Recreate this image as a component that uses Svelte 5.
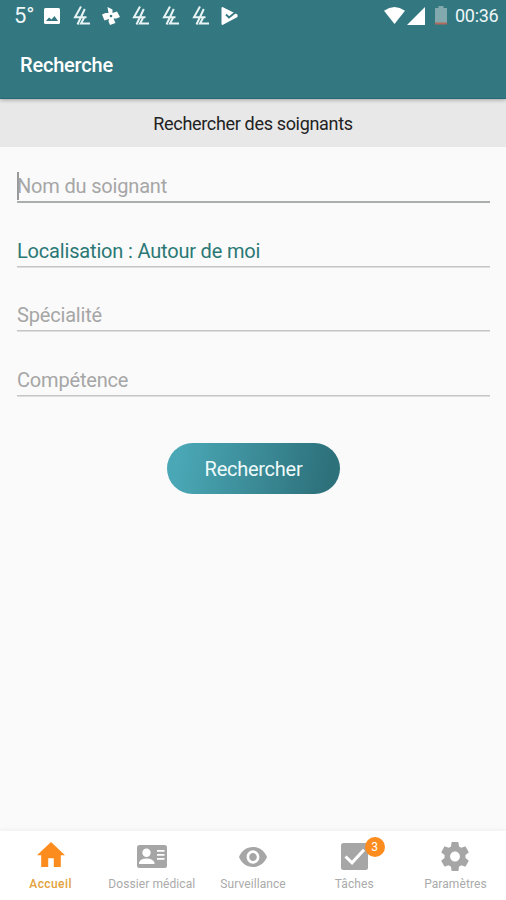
<script>
  const fields = [
    { label: 'Nom du soignant', kind: 'focus' },
    { label: 'Localisation : Autour de moi', kind: 'filled' },
    { label: 'Spécialité', kind: '' },
    { label: 'Compétence', kind: '' }
  ];
  const tabs = [
    { label: 'Accueil', icon: 'home' },
    { label: 'Dossier médical', icon: 'card' },
    { label: 'Surveillance', icon: 'eye' },
    { label: 'Tâches', icon: 'check', badge: 3 },
    { label: 'Paramètres', icon: 'gear' }
  ];
</script>

{#snippet lira()}
  <svg width="18" height="20" viewBox="0 0 18 20" fill="none" stroke="#e8f3f4" stroke-width="2">
    <path d="M8 .5 2 11.200H13.500M11.800 3 4.500 18.500M11 12 8 17.600H17" />
  </svg>
{/snippet}

<div class="screen">
  <header>
    <div class="status">
      <span class="temp">5°</span>
      <svg class="photo" width="16" height="16" viewBox="0 0 16 16"><path fill="#fff" fill-rule="evenodd" d="M1.500 0h13Q16 0 16 1.500v13q0 1.500-1.500 1.500h-13Q0 16 0 14.500v-13Q0 0 1.500 0zM2 13h12L10.500 8 7.500 11.500 5 9.500z" /></svg>
      <span class="l1">{@render lira()}</span>
      <svg class="fan" width="18" height="18" viewBox="0 0 18 18" fill="#fff">
        <path fill-rule="evenodd" d="M5.500 0 10.500 2.500V6L15 4.500 18 10 14.500 11.500H11.500L13.500 16 8 18 6.500 14.500 7 12 2.500 13.500 0 7.500 3.500 6H6.500zM9 7.700a1.300 1.300 0 1 0 .01 0z" />
      </svg>
      <span class="l2">{@render lira()}</span>
      <span class="l3">{@render lira()}</span>
      <span class="l4">{@render lira()}</span>
      <svg class="play" width="17" height="18" viewBox="0 0 17 18"><path fill="#fff" d="M1.500 0 16.500 7.500V10L1.500 18Q.5 18 .5 17V1Q.5 0 1.500 0z" /><path d="M5 7.500 8 10.500 15.500 4.500" fill="none" stroke="#337780" stroke-width="1.800" /></svg>
      <span class="gap"></span>
      <svg class="wifi" width="21" height="17" viewBox="0 0 22 17" preserveAspectRatio="none"><path fill="#fff" d="M0 3.800Q11-3.600 22 3.800L11 17z" /></svg>
      <svg class="signal" width="18" height="18" viewBox="0 0 18 18"><path fill="#fff" d="M18 0v18H0z" /></svg>
      <svg class="battery" width="12" height="19" viewBox="0 0 12 19"><path fill="#82a9ae" d="M3.500 0h5v2H12v15H0V2h3.500z" /><path fill="#b3695c" d="M0 16.500h12v2H0z" /></svg>
      <span class="clock">00:36</span>
    </div>
    <h1>Recherche</h1>
  </header>
  <div class="subtitle"><span>Rechercher des soignants</span></div>

  <main>
    {#each fields as f}
      <div class="field {f.kind}"><span>{f.label}</span></div>
    {/each}
    <button>Rechercher</button>
  </main>

  <nav>
    {#each tabs as t, i}
      <div class="tab" class:active={i === 0}>
        <div class="icon">
          {#if t.icon === 'home'}
            <svg width="28" height="25" viewBox="2 3 20 17" preserveAspectRatio="none"><path d="M10 20v-6h4v6h5v-8h3L12 3 2 12h3v8z" /></svg>
          {:else if t.icon === 'card'}
            <svg width="30" height="23" viewBox="0 0 30 23"><rect width="30" height="23" rx="2.500" /><g fill="#fff"><circle cx="9.500" cy="7.700" r="4.200" /><path d="M2 19v-1.500q1.500-4 7.500-4t8 4V19zM20 5h7.500v1.700H20zM20 9h7.500v1.700H20zM20 13h7.500v1.700H20z" /></g></svg>
          {:else if t.icon === 'eye'}
            <svg width="28" height="20" viewBox="1 4.500 22 15" preserveAspectRatio="none"><path d="M12 4.500C7 4.500 2.730 7.610 1 12c1.730 4.390 6 7.500 11 7.500s9.270-3.110 11-7.500c-1.730-4.390-6-7.500-11-7.500zM12 17c-2.760 0-5-2.240-5-5s2.240-5 5-5 5 2.240 5 5-2.240 5-5 5zm0-8c-1.660 0-3 1.340-3 3s1.340 3 3 3 3-1.340 3-3-1.340-3-3-3z" /></svg>
          {:else if t.icon === 'check'}
            <svg width="27" height="27" viewBox="0 0 27 27"><rect width="27" height="27" rx="2.500" /><path d="m4.500 13.500 6.500 6.300L23 6.700" fill="none" stroke="#fff" stroke-width="3" /></svg>
          {:else}
            <svg width="28" height="29" viewBox="2 2 20 20" preserveAspectRatio="none"><path d="M19.430 12.980c.04-.32.07-.64.07-.98s-.03-.66-.07-.98l2.110-1.650c.19-.15.24-.42.12-.64l-2-3.460c-.12-.22-.39-.3-.61-.22l-2.490 1c-.52-.4-1.080-.73-1.690-.98l-.38-2.650C14.460 2.180 14.250 2 14 2h-4c-.25 0-.46.18-.49.42l-.38 2.650c-.61.25-1.170.59-1.690.98l-2.490-1c-.23-.09-.49 0-.61.22l-2 3.460c-.13.22-.07.49.12.64l2.110 1.650c-.04.32-.07.65-.07.98s.03.66.07.98l-2.110 1.650c-.19.15-.24.42-.12.64l2 3.460c.12.22.39.3.61.22l2.490-1c.52.4 1.080.73 1.690.98l.38 2.650c.03.24.24.42.49.42h4c.25 0 .46-.18.49-.42l.38-2.650c.61-.25 1.170-.59 1.690-.98l2.490 1c.23.09.49 0 .61-.22l2-3.460c.12-.22.07-.49-.12-.64l-2.110-1.650zM12 15.500c-1.930 0-3.500-1.570-3.500-3.500s1.570-3.500 3.500-3.500 3.500 1.570 3.500 3.500-1.570 3.500-3.500 3.500z" /></svg>
          {/if}
          {#if t.badge}<span class="badge">{t.badge}</span>{/if}
        </div>
        <span class="label">{t.label}</span>
      </div>
    {/each}
  </nav>
</div>

<style>
  :global(body) { margin: 0; }
  .screen { width: 506px; height: 900px; display: flex; flex-direction: column; background: #fafafa; font-family: Roboto, sans-serif; overflow: hidden; }
  svg { display: block; flex: none; }
  header { height: 99px; flex: none; background: #337780; color: #fff; box-shadow: 0 1px 4px rgba(0, 0, 0, .3); z-index: 1; box-sizing: border-box; border-bottom: 1px solid #286872; }
  .status { height: 31px; display: flex; align-items: center; padding: 0 7px 0 14px; color: #eef6f7; }
  .temp { font-size: 22px; width: 30px; }
  .l1 { margin-left: 13px; }
  .fan { margin-left: 11px; }
  .l2 { margin-left: 12px; }
  .l3, .l4 { margin-left: 12px; }
  .play { margin-left: 11px; }
  .gap { flex: 1; }
  .signal { margin-left: 2px; }
  .battery { margin-left: 10px; }
  .clock { font-size: 18px; margin-left: 8px; width: 44px; white-space: nowrap; letter-spacing: -.3px; }
  h1 { margin: 0; padding: 1px 0 0 20px; font-size: 20px; line-height: 66px; font-weight: 500; letter-spacing: -.2px; }
  .subtitle { height: 48px; flex: none; background: #e8e8e8; text-align: center; font-size: 18px; line-height: 50px; letter-spacing: -.33px; color: #222; }
  main { flex: 1; padding: 20px 16px 0 17px; display: flex; flex-direction: column; }
  .field { height: 34px; margin-bottom: 29.5px; border-bottom: 1px solid #c6c6c6; box-shadow: 0 1px #dedede; color: #a6a6a6; font-size: 20px; line-height: 38px; letter-spacing: -.18px; white-space: nowrap; }
  .field.focus { height: 34px; margin-bottom: 28.5px; border-bottom: 2px solid #a9adad; box-shadow: none; }
  .field.focus span { box-shadow: inset 2px 0 #999; padding: 2px 0; }
  .field.filled { color: #2a7875; }
  button { align-self: center; width: 173px; height: 51px; margin-top: 18px; border: 0; border-radius: 26px; padding: 1px 0 0; background: linear-gradient(100deg, #4aa7b5 8%, #2d717b 92%); color: #eefafa; font: 20px Roboto, sans-serif; letter-spacing: -.27px; }
  nav { height: 69px; flex: none; display: flex; background: #fff; box-shadow: 0 -1px 4px rgba(0, 0, 0, .05); }
  .tab { flex: 1; display: flex; flex-direction: column; align-items: center; color: #aaa; fill: #a6a6a6; }
  .active { color: #e2a13c; fill: #fb8c1d; }
  .icon { position: relative; height: 51px; display: flex; align-items: center; }
  .active .icon { height: 46px; margin-bottom: 5px; }
  .badge { position: absolute; left: 24px; top: 6px; width: 20px; height: 20px; border-radius: 50%; background: #fb8c1d; color: #fff; font-size: 12px; line-height: 20px; text-align: center; }
  .label { font-size: 12px; line-height: 5px; letter-spacing: .08px; white-space: nowrap; }
  .active .label { font-weight: 500; letter-spacing: .4px; }
</style>
